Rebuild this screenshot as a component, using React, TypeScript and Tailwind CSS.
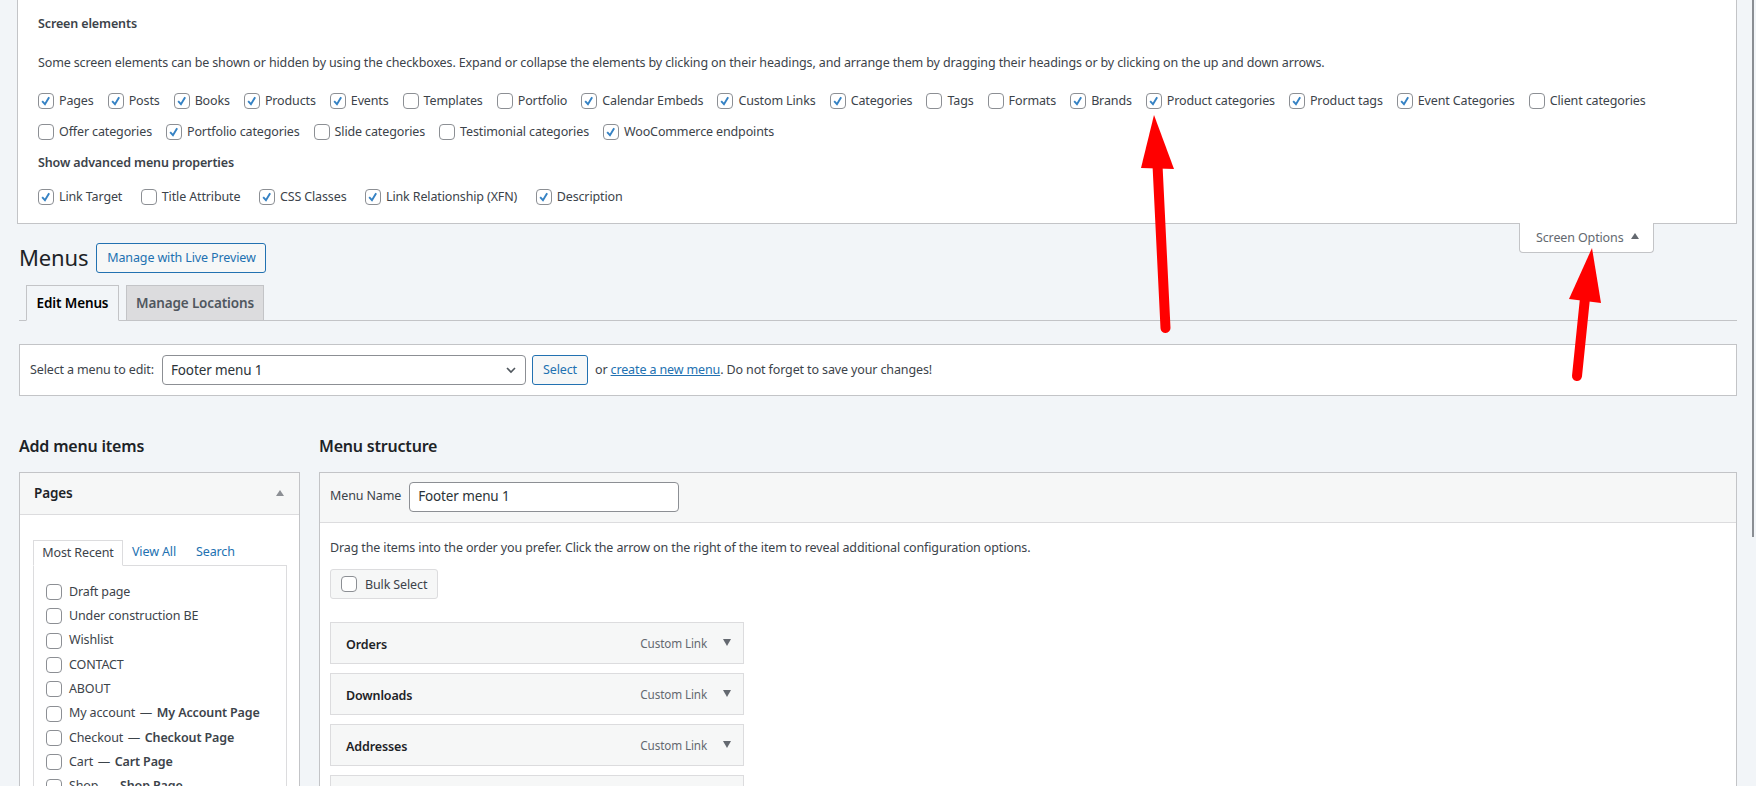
const sans = "font-['Noto_Sans',sans-serif]";

function Check({ on, label, wide }: { on?: boolean; label?: string; wide?: boolean }) {
  return (
    <label className={`flex items-center text-[#3c434a] whitespace-nowrap ${wide ? 'mr-[18.5px]' : 'mr-[14px]'}`}>
      <CheckBox on={on} />
      {label && <span className="ml-[5px]">{label}</span>}
    </label>
  );
}

function CheckBox({ on }: { on?: boolean }) {
  return (
    <span className="w-4 h-4 shrink-0 rounded-[4px] border border-[#8c8f94] bg-white flex items-center justify-center">
      {on && (
        <svg viewBox="0 0 16 16" className="w-4 h-4">
          <path d="M3.6 8.2 L6.8 11.6 L11.6 3.6" fill="none" stroke="#3582c4" strokeWidth="2.2" />
        </svg>
      )}
    </span>
  );
}

const row1: [string, boolean][] = [
  ['Pages', true], ['Posts', true], ['Books', true], ['Products', true], ['Events', true],
  ['Templates', false], ['Portfolio', false], ['Calendar Embeds', true], ['Custom Links', true],
  ['Categories', true], ['Tags', false], ['Formats', false], ['Brands', true],
  ['Product categories', true], ['Product tags', true], ['Event Categories', true], ['Client categories', false],
];
const row2: [string, boolean][] = [
  ['Offer categories', false], ['Portfolio categories', true], ['Slide categories', false],
  ['Testimonial categories', false], ['WooCommerce endpoints', true],
];
const row3: [string, boolean][] = [
  ['Link Target', true], ['Title Attribute', false], ['CSS Classes', true],
  ['Link Relationship (XFN)', true], ['Description', true],
];

const pages: [string, string?][] = [
  ['Draft page'], ['Under construction BE'], ['Wishlist'], ['CONTACT'], ['ABOUT'],
  ['My account', 'My Account Page'], ['Checkout', 'Checkout Page'], ['Cart', 'Cart Page'], ['Shop', 'Shop Page'],
];

function MenuItem({ name }: { name: string }) {
  return (
    <div className="h-[42px] shrink-0 w-[414px] border border-[#dcdcde] bg-[#f6f7f7] flex items-center pl-[15px] pr-[12px]">
      <span className="font-semibold text-[#1d2327] pt-[4px]">{name}</span>
      <span className="ml-auto text-[11.7px] text-[#646970] pt-[1px]">Custom Link</span>
      <span className="ml-[16px] w-0 h-0 border-x-[4px] border-x-transparent border-t-[7px] border-t-[#646970] mb-[1px]" />
    </div>
  );
}

export default function App() {
  return (
    <div className={`relative h-[786px] overflow-hidden bg-[#f2f5f8] text-[12.5px] tracking-[-0.13px] text-[#3c434a] ${sans}`}>
      <div className="ml-[17px] mr-[19px] h-[224px] bg-white border-x border-b border-[#c3c4c7] pl-[20px] pt-[14px]">
        <div className="font-semibold h-5 leading-5">Screen elements</div>
        <p className="mt-[19px] h-5 leading-5 whitespace-nowrap">
          Some screen elements can be shown or hidden by using the checkboxes. Expand or collapse the elements by clicking on their headings, and arrange them by dragging their headings or by clicking on the up and down arrows.
        </p>
        <div className="flex mt-[20px] h-4">
          {row1.map(([l, c]) => <Check key={l} label={l} on={c} />)}
        </div>
        <div className="flex mt-[15px] h-4">
          {row2.map(([l, c]) => <Check key={l} label={l} on={c} />)}
        </div>
        <div className="font-semibold mt-[13px] h-5 leading-5">Show advanced menu properties</div>
        <div className="flex mt-[16px] h-4">
          {row3.map(([l, c]) => <Check key={l} label={l} on={c} wide />)}
        </div>
      </div>

      <div className="flex justify-end mr-[102px] -mt-px h-[30px]">
        <div className="w-[135px] h-[30px] bg-white border-x border-b border-[#c3c4c7] rounded-b-[4px] flex items-center pl-4 text-[#646970]">
          <span className="pt-[1px]">Screen Options</span>
          <span className="ml-[7px] mb-[3px] w-0 h-0 border-x-[4px] border-x-transparent border-b-[6px] border-b-[#646970]" />
        </div>
      </div>

      <div className="pl-[19px] pr-[19px] -mt-[10px]">
        <div className="flex items-center h-[30px]">
          <h1 className="text-[22px] text-[#1d2327] font-normal mb-[2px]">Menus</h1>
          <span className="ml-2 w-[170px] h-[30px] border border-[#2271b1] rounded-[3px] bg-[#f6f7f7] text-[#2271b1] flex items-center justify-center">
            Manage with Live Preview
          </span>
        </div>

        <div className="flex items-end h-[48px] border-b border-[#c3c4c7] pl-[7px] -mb-px">
          <div className="w-[93px] h-[36px] -mb-px border border-[#c3c4c7] border-b-[#f2f5f8] bg-[#f2f5f8] flex items-center justify-center font-semibold text-[13.5px] text-black">
            Edit Menus
          </div>
          <div className="ml-[7px] w-[138px] h-[36px] -mb-px border border-[#c3c4c7] bg-[#dcdcde] flex items-center justify-center font-semibold text-[13.5px] text-[#50575e]">
            Manage Locations
          </div>
        </div>

        <div className="mt-[24px] h-[52px] bg-white border border-[#c3c4c7] flex items-center pl-[10px]">
          <span>Select a menu to edit:</span>
          <div className="ml-[8px] w-[364px] h-[30px] border border-[#8c8f94] rounded-[4px] bg-white flex items-center pl-[8px] pr-[6px] text-[13.5px] text-[#2c3338]">
            Footer menu 1
            <svg viewBox="0 0 20 20" className="ml-auto w-4 h-4">
              <path d="M5 7.5 L10 12.5 L15 7.5" fill="none" stroke="#50575e" strokeWidth="2" />
            </svg>
          </div>
          <span className="ml-[6px] w-[56px] h-[30px] border border-[#2271b1] rounded-[3px] bg-[#f6f7f7] text-[#2271b1] flex items-center justify-center">Select</span>
          <span className="ml-[7px]">
            or <span className="text-[#2271b1] underline">create a new menu</span>. Do not forget to save your changes!
          </span>
        </div>

        <div className="flex mt-[37px]">
          <div className="w-[281px] shrink-0">
            <h2 className="h-[34px] text-base font-semibold text-[#1d2327] leading-[26px] tracking-[-0.2px]">Add menu items</h2>
            <div className="mt-[5px] h-[400px] bg-white border border-[#c3c4c7]">
              <div className="h-[42px] bg-[#f6f7f7] border-b border-[#dcdcde] flex items-center px-[14px] font-semibold text-[13.5px] text-[#1d2327]">
                Pages
                <span className="ml-auto mr-[1px] mb-[2px] w-0 h-0 border-x-[4px] border-x-transparent border-b-[6px] border-b-[#8c8f94]" />
              </div>
              <div className="flex items-end pl-[13px] mt-[25px] h-[25px]">
                <span className="w-[90px] h-[26px] -mb-px border border-[#dcdcde] border-b-white bg-white flex items-center justify-center relative">Most Recent</span>
                <span className="ml-[9px] h-full flex items-center text-[#2271b1]">View All</span>
                <span className="ml-[20px] h-full flex items-center text-[#2271b1]">Search</span>
              </div>
              <div className="ml-[13px] w-[254px] h-[300px] border border-[#dcdcde] pl-[12px] pt-[18px] flex flex-col gap-[8.35px]">
                {pages.map(([a, b]) => (
                  <div key={a} className="flex items-center h-4 whitespace-nowrap">
                    <CheckBox />
                    <span className="ml-[7px]">
                      {a}
                      {b && <> <span className="px-[1.5px]">—</span> <b className="font-semibold">{b}</b></>}
                    </span>
                  </div>
                ))}
              </div>
            </div>
          </div>

          <div className="ml-[19px] flex-1">
            <h2 className="h-[34px] text-base font-semibold text-[#1d2327] leading-[26px] tracking-[-0.2px]">Menu structure</h2>
            <div className="mt-[5px] h-[400px] bg-white border border-[#c3c4c7]">
              <div className="h-[50px] bg-[#f6f7f7] border-b border-[#dcdcde] flex items-center pl-[10px] pb-[2px]">
                Menu Name
                <div className="ml-[8px] w-[270px] h-[30px] border border-[#8c8f94] rounded-[4px] bg-white flex items-center pl-[8px] text-[13.5px] text-[#2c3338]">
                  Footer menu 1
                </div>
              </div>
              <div className="pl-[10px] pt-[15px]">
                <p className="h-5 leading-5">Drag the items into the order you prefer. Click the arrow on the right of the item to reveal additional configuration options.</p>
                <div className="mt-[11px] w-[108px] h-[30px] border border-[#dcdcde] rounded-[3px] bg-[#f6f7f7] flex items-center pl-[10px]">
                  <CheckBox />
                  <span className="ml-[8px] pt-[2px]">Bulk Select</span>
                </div>
                <div className="mt-[23px] flex flex-col gap-[9px]">
                  <MenuItem name="Orders" />
                  <MenuItem name="Downloads" />
                  <MenuItem name="Addresses" />
                  <MenuItem name="Account details" />
                </div>
              </div>
            </div>
          </div>
        </div>
      </div>

      <div className="absolute right-[2px] top-0 w-[2px] h-[537px] bg-[#8a8e93]" />

      <svg className="absolute inset-0 pointer-events-none" width="1756" height="786" viewBox="0 0 1756 786">
        <path d="M1154 115 L1174 169 L1141 168 Z" fill="#ff0000" />
        <path d="M1157.5 165 L1165.5 328" fill="none" stroke="#ff0000" strokeWidth="10" strokeLinecap="round" />
        <path d="M1592 248 L1601 303 L1569 299 Z" fill="#ff0000" />
        <path d="M1585 298 L1577 376" fill="none" stroke="#ff0000" strokeWidth="10" strokeLinecap="round" />
      </svg>
    </div>
  );
}
